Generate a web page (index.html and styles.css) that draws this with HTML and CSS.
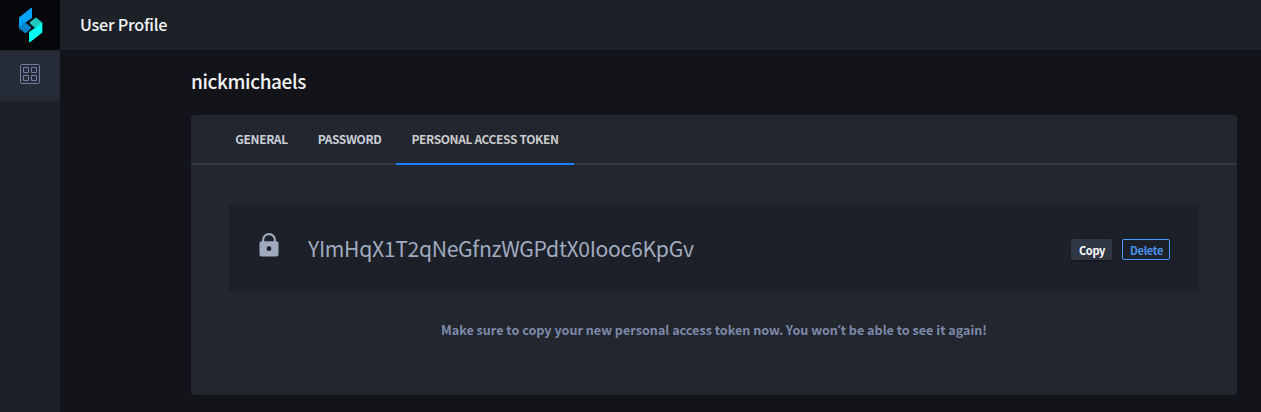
FILE: index.html
```html
<!DOCTYPE html>
<html lang="en">
<head>
<meta charset="utf-8">
<title>User Profile</title>
<link rel="stylesheet" href="styles.css">
</head>
<body>
<div class="app">
  <aside class="sidebar">
    <a class="logo">
      <svg width="24" height="36" viewBox="0 0 24 36">
        <path fill="#0083c9" d="M0 18L6.500 14.500L12 19V20.500L7 25H6L0 20.500Z"/>
        <path fill="#00a4ff" d="M0 9.500L12 0H13V10L0 19Z"/>
        <path fill="#1fc9be" d="M11 14L17 9.500L23.300 14.500V16L16 20L11 15.500Z"/>
        <path fill="#00fff0" d="M23.300 14.800V24.500L11 34.300H10V24Z"/>
      </svg>
    </a>
    <a class="side-item">
      <svg width="20" height="20" viewBox="0 0 20 20" fill="none" stroke="#6f7f9f">
        <rect x=".5" y=".5" width="19" height="19" rx="1"/>
        <path d="M3.500 3.500h5v5h-5zM11.500 3.500h5v5h-5zM3.500 11.500h5v5h-5zM11.500 11.500h5v5h-5z"/>
      </svg>
    </a>
  </aside>
  <div class="page">
    <header class="topbar"><span class="topbar-title">User Profile</span></header>
    <main class="content">
      <h1 class="username">nickmichaels</h1>
      <section class="card">
        <nav class="tabs">
          <a class="tab">GENERAL</a>
          <a class="tab">PASSWORD</a>
          <a class="tab tab-active">PERSONAL ACCESS TOKEN</a>
        </nav>
        <div class="token-box">
          <svg class="lock" width="20" height="24" viewBox="0 0 20 24">
            <path fill="none" stroke="#a0aabf" stroke-width="2.200" d="M4.100 9V7a5.900 5.900 0 0 1 11.800 0v2"/>
            <path fill="#a0aabf" fill-rule="evenodd" d="M2.500 8.200h15a2 2 0 0 1 2 2v11.200a2 2 0 0 1-2 2h-15a2 2 0 0 1-2-2V10.200a2 2 0 0 1 2-2zM10 13.300a2.400 2.400 0 1 0 0 4.800a2.400 2.400 0 0 0 0-4.800z"/>
          </svg>
          <span class="token">YImHqX1T2qNeGfnzWGPdtX0Iooc6KpGv</span>
          <button class="btn btn-copy">Copy</button>
          <button class="btn btn-delete">Delete</button>
        </div>
        <p class="notice">Make sure to copy your new personal access token now. You won<span class="apostrophe">’</span>t be able to see it again!</p>
      </section>
    </main>
  </div>
</div>
</body>
</html>
```
FILE: styles.css
```css
* { box-sizing: border-box; }
body {
  margin: 0;
  background: #131419;
  font-family: "Noto Sans CJK SC", "Open Sans", sans-serif;
  overflow: hidden;
}
.app { display: flex; height: 412px; }
.sidebar { width: 60px; background: #1c2128; flex: none; }
.logo { display: flex; height: 50px; padding: 8px 0 0 19px; background: #05070a; }
.side-item {
  display: flex;
  height: 51px;
  padding: 13px 0 0 20px;
  border-top: 1px solid #1c2128;
  background: #262c37;
}
.page { flex: 1; min-width: 0; }
.topbar {
  display: flex;
  align-items: center;
  height: 50px;
  padding: 0 0 2px 20px;
  background: #1c2128;
  color: #f3f4f5;
  font-size: 16.2px;
  font-weight: 500;
  line-height: 24px;
  letter-spacing: -.24px;
}
.content { padding: 0 24px 0 131px; }
.username {
  display: flex;
  align-items: center;
  height: 65px;
  margin: 0;
  padding-bottom: 4px;
  color: #f3f4f5;
  font-size: 19px;
  font-weight: 500;
  line-height: 30px;
  letter-spacing: -.38px;
}
.card { height: 280px; border-radius: 4px; background: #22262f; }
.tabs {
  display: flex;
  height: 50px;
  padding-left: 29.3px;
  border-bottom: 2px solid #303845;
}
.tab {
  display: flex;
  align-items: center;
  height: 50px;
  padding: 0 15px;
  border-bottom: 2px solid transparent;
  color: #c9ced8;
  font-size: 12px;
  font-weight: 700;
  line-height: 18px;
  letter-spacing: -.38px;
  white-space: nowrap;
}
.tab-active { border-bottom-color: #1683fb; color: #cbcbcb; }
.token-box {
  display: flex;
  align-items: center;
  height: 90px;
  margin: 38px 38px 0;
  padding: 0 29px 0 30px;
  border-radius: 2px;
  background: #1c2028;
}
.lock { margin-bottom: 6px; }
.token {
  flex: 1;
  margin-left: 29px;
  color: #a0aabf;
  font-size: 21.2px;
  line-height: 30px;
  letter-spacing: -.34px;
}
.btn {
  display: flex;
  align-items: center;
  justify-content: center;
  height: 21px;
  margin: 3px 0 0 10px;
  padding: 0 0 0 1px;
  border: 0;
  border-radius: 2px;
  box-shadow: 0 1px 2px rgba(0,0,0,.4);
  font-family: inherit;
  font-size: 11px;
  font-weight: 700;
  line-height: 16px;
  letter-spacing: -.3px;
}
.btn-copy { width: 41px; background: #303745; color: #fff; }
.btn-delete { width: 48px; border: 1px solid #4a9dfc; background: #1c2028; color: #4a96f0; }
.notice {
  display: flex;
  justify-content: center;
  margin: 27px 0 0;
  color: #7c8aa8;
  font-size: 12.6px;
  font-weight: 700;
  line-height: 20px;
  white-space: pre;
}
.apostrophe { font-family: "Open Sans", sans-serif; }
```
